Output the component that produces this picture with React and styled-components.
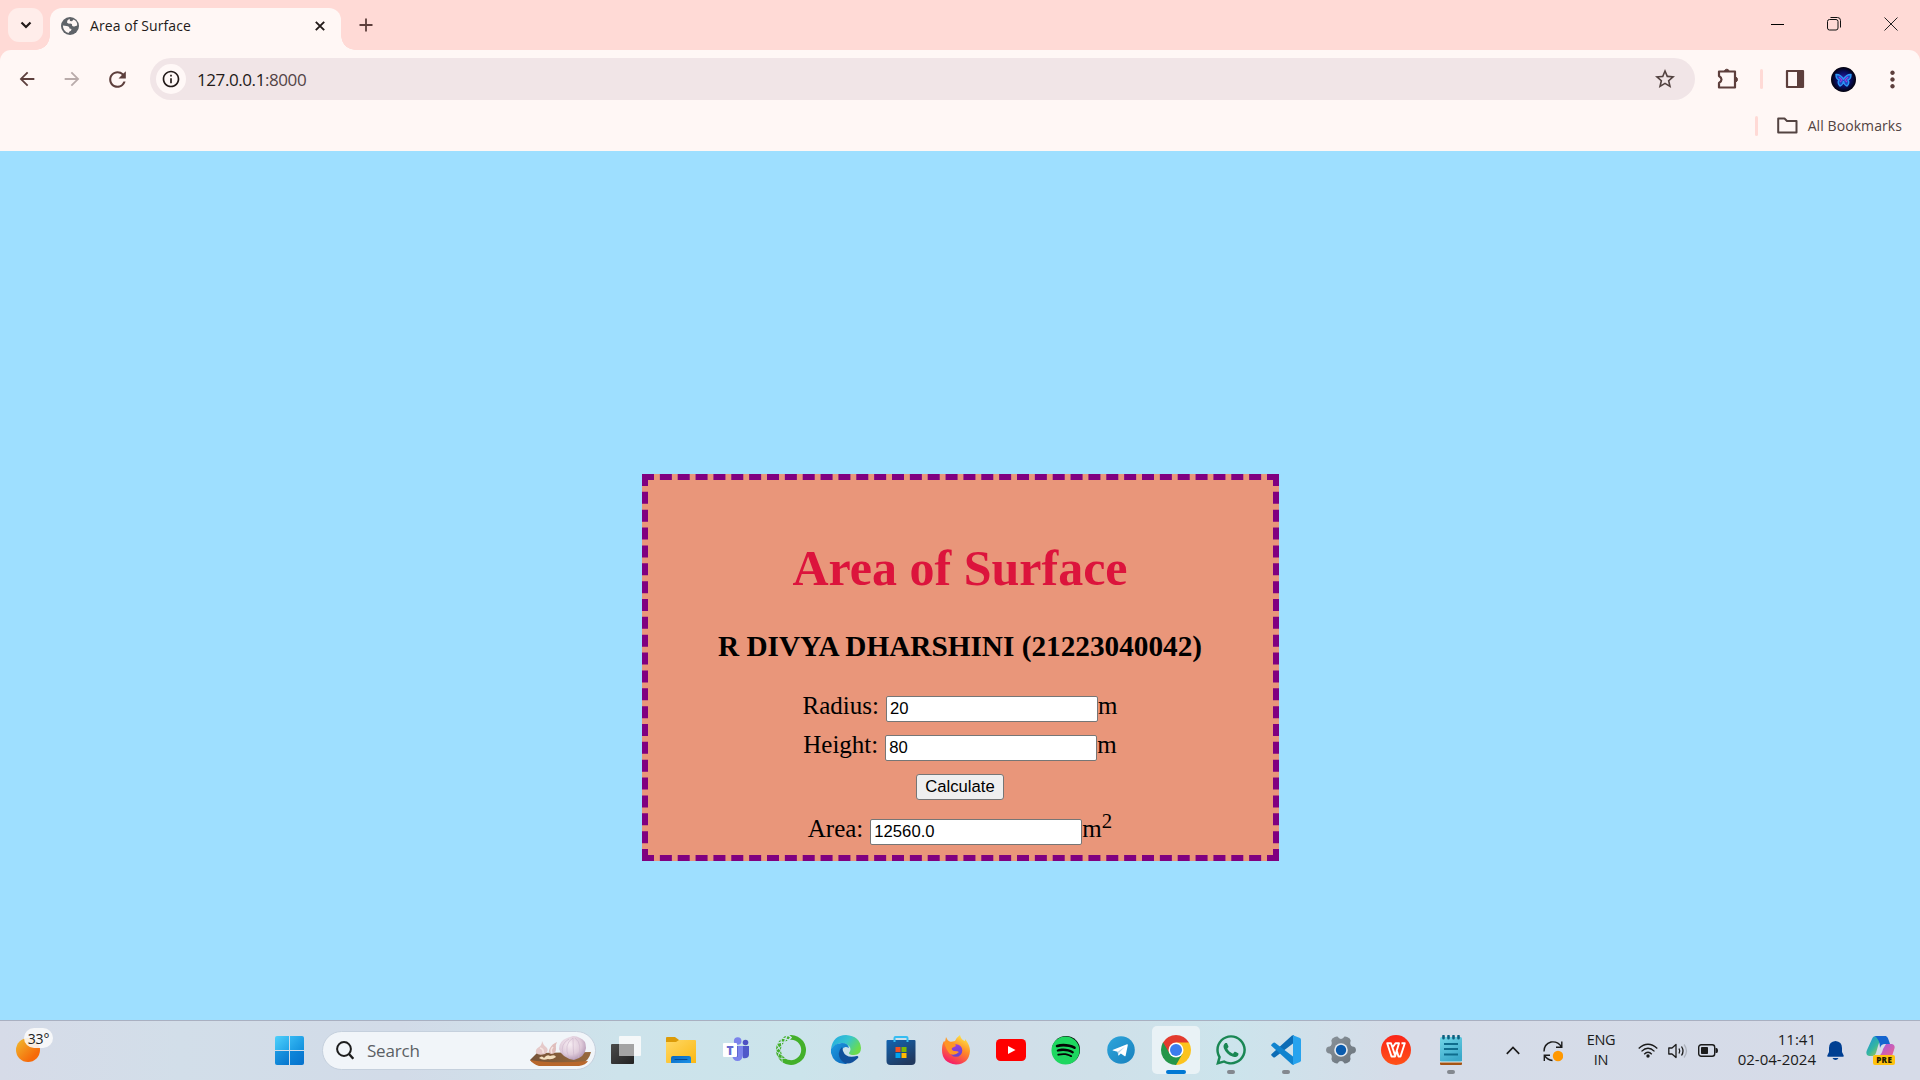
import React from "react";
import styled, { createGlobalStyle } from "styled-components";
import {
  MdArrowBack,
  MdArrowForward,
  MdRefresh,
  MdInfoOutline,
  MdStarBorder,
  MdMoreVert,
} from "react-icons/md";
import { FaWhatsapp, FaSpotify } from "react-icons/fa";
import { SiAnaconda } from "react-icons/si";

const GlobalStyle = createGlobalStyle`
  * { box-sizing: border-box; }
  html, body { margin: 0; padding: 0; }
  body { overflow: hidden; }
  svg { display: block; flex: none; }
`;

const ui = `"Open Sans", "Noto Sans", sans-serif`;

const Screen = styled.div`
  width: 1920px;
  height: 1080px;
  display: flex;
  flex-direction: column;
  background: #ffdad6;
  font-family: ${ui};
`;

/* ---------- window frame ---------- */

const TabStrip = styled.header`
  height: 50px;
  display: flex;
  align-items: flex-start;
  padding: 8px 0 0 8px;
  flex: none;
`;

const TabSearch = styled.button`
  width: 35px;
  height: 34px;
  padding: 0;
  border: 0;
  border-radius: 11px;
  background: #ffedea;
  display: grid;
  place-items: center;
`;

const Tab = styled.div`
  position: relative;
  width: 291px;
  height: 42px;
  margin-left: 7px;
  padding: 0 16px 7px 11px;
  display: flex;
  align-items: center;
  border-radius: 12px 12px 0 0;
  background: #fff7f5;
  &::before,
  &::after {
    content: "";
    position: absolute;
    bottom: 0;
    width: 14px;
    height: 14px;
  }
  &::before {
    left: -14px;
    background: radial-gradient(circle at 0 0, transparent 13.5px, #fff7f5 14px);
  }
  &::after {
    right: -14px;
    background: radial-gradient(circle at 100% 0, transparent 13.5px, #fff7f5 14px);
  }
`;

const TabTitle = styled.span`
  flex: 1;
  margin-left: 11px;
  font-size: 14px;
  letter-spacing: 0.08px;
  color: #231a19;
  white-space: nowrap;
`;

const NewTab = styled.div`
  margin: 10px 0 0 18px;
`;

const WindowButtons = styled.div`
  margin: 9px 22px 0 auto;
  display: flex;
  gap: 43px;
`;

const Toolbar = styled.div`
  height: 58px;
  flex: none;
  padding: 8px 10px 0 16px;
  display: flex;
  align-items: flex-start;
  background: #fff7f5;
  border-radius: 11px 11px 0 0;
  color: #534341;
`;

const NavButtons = styled.div`
  width: 134px;
  height: 42px;
  flex: none;
  display: flex;
  align-items: center;
`;

const NavIcon = styled.span`
  display: flex;
  margin-right: ${(p) => p.$gap}px;
  color: ${(p) => (p.$off ? "#b9abaa" : "#5d3f3c")};
`;

const Omnibox = styled.div`
  width: 1545px;
  height: 42px;
  flex: none;
  border-radius: 21px;
  background: #f1e5e7;
  display: flex;
  align-items: center;
  padding: 0 18px 0 6px;
`;

const SiteInfo = styled.span`
  width: 30px;
  height: 30px;
  border-radius: 50%;
  background: #fff8f7;
  color: #231a19;
  display: grid;
  place-items: center;
`;

const Address = styled.span`
  flex: 1;
  margin-left: 11px;
  font-size: 17px;
  letter-spacing: -0.42px;
  color: #231a19;
  span {
    color: #534346;
  }
`;

const ToolIcons = styled.div`
  height: 42px;
  flex: 1;
  display: flex;
  align-items: center;
  margin-left: 22px;
`;

const Divider = styled.span`
  width: 3px;
  height: 20px;
  flex: none;
  border-radius: 2px;
  background: #ffdad6;
  margin: ${(p) => p.$margin};
`;

const AvatarSlot = styled.span`
  margin: 0 23px 0 26px;
`;

const Bookmarks = styled.div`
  height: 43px;
  flex: none;
  padding: 0 18px 8px 0;
  display: flex;
  align-items: center;
  justify-content: flex-end;
  background: #fff7f5;
  color: #534341;
  font-size: 14px;
  letter-spacing: 0.08px;
  span:last-child {
    margin-left: 10px;
  }
`;

/* ---------- web page ---------- */

const Page = styled.main`
  height: 869px;
  flex: none;
  padding-top: 323px;
  display: flex;
  justify-content: center;
  align-items: flex-start;
  background: #9edfff;
  font-family: "Liberation Serif", "Times New Roman", serif;
`;

const Card = styled.section`
  width: 637px;
  height: 387px;
  padding-top: 60px;
  border: 6px dashed #800080;
  background: #e9967a;
  color: #000;
  display: flex;
  flex-direction: column;
  align-items: center;
`;

const Title = styled.h1`
  margin: 0;
  font-size: 50px;
  line-height: 57px;
  color: #dc143c;
  white-space: nowrap;
`;

const Author = styled.h3`
  margin: 33px 0 0;
  font-size: 29.25px;
  line-height: 33px;
  white-space: nowrap;
`;

const Field = styled.div`
  height: 28px;
  margin-top: ${(p) => p.$top}px;
  display: flex;
  align-items: baseline;
  font-size: 25px;
  line-height: 28px;
  white-space: nowrap;
`;

const Value = styled.input`
  width: 212px;
  height: 26px;
  margin-left: 7px;
  padding: 1px 3px;
  border: 1px solid #767676;
  border-radius: 2px;
  background: #fff;
  color: #000;
  font: 16.667px "Liberation Sans", Arial, sans-serif;
`;

const Power = styled.sup`
  font-size: 20.8px;
  line-height: 0;
  vertical-align: baseline;
  position: relative;
  top: -9px;
`;

const Calculate = styled.button`
  width: 88px;
  height: 26px;
  margin-top: 15px;
  padding: 0;
  flex: none;
  border: 1px solid #767676;
  border-radius: 3px;
  background: #efefef;
  color: #000;
  font: 16.667px "Liberation Sans", Arial, sans-serif;
`;

/* ---------- taskbar ---------- */

const Taskbar = styled.footer`
  height: 60px;
  flex: none;
  display: flex;
  align-items: center;
  border-top: 1px solid #a9b0c1;
  background: linear-gradient(
    90deg,
    #d6dbe8 0,
    #d2dee9 180px,
    #d2dbe8 400px,
    #cde3eb 620px,
    #cbe4eb 800px,
    #d1dee9 950px,
    #cfe0e9 1100px,
    #cce4ec 1230px,
    #d5dce8 1400px,
    #d6dbe8 1920px
  );
`;

const Weather = styled.div`
  position: relative;
  width: 24px;
  height: 24px;
  margin: 0 0 1px 16px;
  border-radius: 50%;
  background: linear-gradient(135deg, #f0be30, #f66a0a 75%);
`;

const Degrees = styled.span`
  position: absolute;
  left: 8px;
  top: -10px;
  width: 29px;
  height: 20px;
  border-radius: 10px;
  background: rgba(251, 250, 250, 0.88);
  color: #222;
  font-size: 14px;
  letter-spacing: -0.2px;
  line-height: 21px;
  text-align: center;
`;

const Start = styled.div`
  margin-left: 235px;
  display: grid;
  grid-template-columns: 14px 14px;
  grid-auto-rows: 14px;
  gap: 1px;
  border-radius: 2px;
  overflow: hidden;
`;

const Pane = styled.i`
  background: linear-gradient(135deg, ${(p) => p.$from}, ${(p) => p.$to});
`;

const SearchBox = styled.div`
  width: 274px;
  height: 39px;
  flex: none;
  margin-left: 18px;
  padding: 0 4px 0 13px;
  border: 1px solid #c5d0dd;
  border-radius: 20px;
  background: #f1f5f9;
  display: flex;
  align-items: center;
  color: #5b5f64;
  font-size: 17px;
  letter-spacing: -0.2px;
  span {
    flex: 1;
    margin-left: 13px;
  }
`;

const Apps = styled.div`
  display: flex;
  margin-left: 2px;
`;

const AppSlot = styled.div`
  width: 55px;
  height: 59px;
  padding-bottom: 1px;
  display: flex;
  align-items: center;
  justify-content: center;
`;

const Tile = styled.div`
  width: 48px;
  height: 48px;
  padding-top: 9px;
  border-radius: 5px;
  background: ${(p) => (p.$active ? "#e9f2f6" : "transparent")};
  display: flex;
  flex-direction: column;
  align-items: center;
  justify-content: space-between;
`;

const IconBox = styled.span`
  width: 30px;
  height: 30px;
  display: flex;
  align-items: center;
  justify-content: center;
`;

const Running = styled.i`
  width: ${(p) => (p.$active ? 20 : 8)}px;
  height: ${(p) => (p.$shown ? 4 : 0)}px;
  border-radius: 2px;
  background: ${(p) => (p.$active ? "#0078d4" : "#83888f")};
`;

const Round = styled.span`
  width: ${(p) => p.$size}px;
  height: ${(p) => p.$size}px;
  border-radius: 50%;
  background: ${(p) => p.$bg};
  display: flex;
  align-items: center;
  justify-content: center;
`;

const Tray = styled.div`
  flex: 1;
  display: flex;
  align-items: center;
  color: #1b1b1b;
`;

const TrayText = styled.div`
  width: ${(p) => p.$width}px;
  margin-left: ${(p) => p.$left}px;
  padding-bottom: ${(p) => p.$lift}px;
  text-align: ${(p) => p.$align};
  font-size: ${(p) => p.$size}px;
  line-height: 20px;
  letter-spacing: ${(p) => p.$track}px;
  white-space: nowrap;
`;

const TrayIcon = styled.span`
  margin-left: ${(p) => p.$left}px;
`;

/* ---------- drawings ---------- */

const Globe = () => (
  <svg width="18" height="18" viewBox="0 0 18 18">
    <circle cx="9" cy="9" r="9" fill="#5f6368" />
    <path d="M8.500 1.800Q5.500 3.500 6 5.500 7 7 9 6.500 11.500 6.500 11 8.500 12 10 14 9.300L16.200 8.500Q16.500 4 12.500 2.500L11 4.200 9 4Z" fill="#fff7f5" />
    <path d="M1.900 8.500L5.500 9Q8.500 9 8.500 11.500L10.500 12Q10.500 14 8.500 14.500L7.500 16Q2 14.500 1.900 8.500Z" fill="#fff7f5" />
  </svg>
);

const Garlic = () => (
  <svg width="62" height="30" viewBox="0 0 62 30">
    <defs>
      <radialGradient id="bulb" cx=".4" cy=".35" r=".7">
        <stop offset="0" stopColor="#f6ecf2" />
        <stop offset=".6" stopColor="#dfcbda" />
        <stop offset="1" stopColor="#ae92b0" />
      </radialGradient>
      <linearGradient id="board" x2="1">
        <stop offset="0" stopColor="#755338" />
        <stop offset="1" stopColor="#98693b" />
      </linearGradient>
    </defs>
    <path d="M1 24L8 17 62 16Q60 24 54 27L10 28Q4 27 1 24Z" fill="url(#board)" />
    <path d="M1 24Q25 28 59 25Q57 29 50 30H10Q4 28 1 24Z" fill="#b8672c" />
    <path d="M13 5Q14 9 18 12 20 15 16 18 10 20 7 17 6 13 10 11 13 9 13 5Z" fill="#e5c9c9" />
    <path d="M28 6Q23 8 21 12 18 17 22 18 27 18 27 13Q26 9 28 6Z" fill="#dfbebc" />
    <path d="M11 12Q15 13 14 17M24 11Q21 14 23 17" stroke="#f5e4e0" strokeWidth="1.600" fill="none" />
    <path d="M44 0Q48 0 51 2 57 4 57 12 56 21 45 24 33 22 30 13 30 5 38 2Z" fill="url(#bulb)" />
    <path d="M44 2Q34 8 40 22M46 2Q54 8 49 22M44 2Q44 12 45 23M40 3Q31 8 34 18" stroke="#cdb5cb" fill="none" strokeWidth=".6" />
    <path d="M10 22q3-3 5 0 3-4 6-2 5-2 6 1-4 3-8 2-5 2-9-1Z" fill="#f3dfbf" />
  </svg>
);

const TaskView = () => (
  <svg width="30" height="30" viewBox="0 0 30 30">
    <defs>
      <linearGradient id="tv" y2="1">
        <stop offset="0" stopColor="#4b4b4b" />
        <stop offset="1" stopColor="#222" />
      </linearGradient>
    </defs>
    <rect x="0" y="9" width="23" height="20" rx="1" fill="url(#tv)" />
    <rect x="8" y="1" width="22" height="20" rx="1" fill="#fafafa" opacity=".88" />
    <path d="M8 9H23V21H8Z" fill="#999" opacity=".85" />
  </svg>
);

const Explorer = () => (
  <svg width="30" height="30" viewBox="0 0 30 30">
    <defs>
      <linearGradient id="fold" x2="1" y2="1">
        <stop offset="0" stopColor="#ffd865" />
        <stop offset="1" stopColor="#fbb813" />
      </linearGradient>
      <linearGradient id="foldblue" y2="1">
        <stop offset="0" stopColor="#0b67be" />
        <stop offset="1" stopColor="#1a91e8" />
      </linearGradient>
    </defs>
    <path d="M0 3Q0 2 1 2H9L13 5V8H0Z" fill="#dc9b08" />
    <path d="M0 7H10L13 5H29Q30 5 30 6V28H1Q0 28 0 27Z" fill="url(#fold)" />
    <path d="M5 28V23Q5 21 7 21H23Q25 21 25 23V28Z" fill="url(#foldblue)" />
    <path d="M9 24.5H21" stroke="#074a93" strokeLinecap="round" />
  </svg>
);

const Teams = () => (
  <svg width="28" height="26" viewBox="0 0 28 26">
    <circle cx="23.5" cy="5.5" r="2.8" fill="#4f52c4" />
    <circle cx="15.7" cy="4" r="3.8" fill="#7b83eb" />
    <path d="M19 9H27V18Q26 22 21 21Z" fill="#5059c9" />
    <path d="M10 9H21V18Q20 24 15.5 24 11 24 10 18Z" fill="#7b83eb" />
    <path d="M12 9H16V20H10Z" fill="#4b53bc" opacity=".6" />
    <rect x="1" y="6" width="14" height="14" rx="1" fill="#fff" />
    <text x="8" y="17.6" textAnchor="middle" fontFamily="Open Sans, sans-serif" fontSize="12" fontWeight="800" fill="#6468cf">
      T
    </text>
  </svg>
);

const Edge = () => (
  <svg width="30" height="30" viewBox="0 0 30 30">
    <defs>
      <linearGradient id="ed1" x2="1" y2=".5">
        <stop offset="0" stopColor="#22a7e4" />
        <stop offset=".55" stopColor="#36c5cf" />
        <stop offset="1" stopColor="#6bdc4c" />
      </linearGradient>
      <linearGradient id="ed2" y2="1">
        <stop offset="0" stopColor="#1d9ce2" />
        <stop offset="1" stopColor="#0b63b8" />
      </linearGradient>
    </defs>
    <path d="M0 14Q2 0 15 0 29 1 30 13 30 20 23 20 18 20 18 18 21 14 18 11 10 4 0 14Z" fill="url(#ed1)" />
    <path d="M0 14Q4 8 11 8 17 8 18 13 13 10 11 15 10 22 16 29 3 30 0 18Z" fill="url(#ed2)" />
    <path d="M11 12Q5 18 10 25 17 33 27 23 28 21 26 21 15 24 12 16Z" fill="#11509b" />
  </svg>
);

const Store = () => (
  <svg width="30" height="30" viewBox="0 0 30 30">
    <defs>
      <linearGradient id="st" x2=".6" y2="1">
        <stop offset="0" stopColor="#1264b1" />
        <stop offset="1" stopColor="#21395f" />
      </linearGradient>
    </defs>
    <path d="M.5 6Q.5 5 1.5 5H28.500Q29.500 5 29.500 6V26Q29.500 30 25.500 30H4.500Q.5 30 .5 26Z" fill="url(#st)" />
    <path d="M8.500 7V3Q8.500 2 9.500 2H20.500Q21.500 2 21.500 3V7" fill="none" stroke="#35bdf2" strokeWidth="2" />
    <path d="M9.500 12H14.500V17H9.500Z" fill="#f25022" />
    <path d="M15.500 12H20.500V17H15.500Z" fill="#7fba00" />
    <path d="M9.500 18H14.500V23H9.500Z" fill="#00a4ef" />
    <path d="M15.500 18H20.500V23H15.500Z" fill="#ffb900" />
  </svg>
);

const Firefox = () => (
  <svg width="30" height="30" viewBox="0 0 30 30">
    <defs>
      <linearGradient id="ff" x1=".8" x2=".3" y2="1">
        <stop offset="0" stopColor="#fff04a" />
        <stop offset=".45" stopColor="#ff8a27" />
        <stop offset="1" stopColor="#f5156c" />
      </linearGradient>
      <linearGradient id="ffp" x2=".3" y2="1">
        <stop offset="0" stopColor="#a53be4" />
        <stop offset="1" stopColor="#6745cf" />
      </linearGradient>
    </defs>
    <path d="M5 2Q6 5 9 7L14 6Q16 2 19 0 20 5 24 6V4Q29 10 29 16 28 29 15 29.500 1 28 1 15 1 9 3 6L4 7Z" fill="url(#ff)" />
    <circle cx="15" cy="15.500" r="6.300" fill="url(#ffp)" />
    <path d="M3 7Q9 5 14 9L15 11 11 13Q10 15 13 16 17 16 18 17 14 21 9 19 5 15 3 7Z" fill="#ff9526" />
  </svg>
);

const YouTube = () => (
  <svg width="30" height="30" viewBox="0 0 30 30">
    <rect y="4" width="30" height="22" rx="4.500" fill="#f00" />
    <path d="M12 11L19.500 15 12 19Z" fill="#fff" />
  </svg>
);

const Telegram = () => (
  <svg width="28" height="30" viewBox="0 0 28 30">
    <defs>
      <linearGradient id="tg" y2="1">
        <stop offset="0" stopColor="#2ea6dc" />
        <stop offset="1" stopColor="#1880bd" />
      </linearGradient>
    </defs>
    <circle cx="14" cy="15" r="13.800" fill="url(#tg)" />
    <path d="M5.500 15L20 9.300Q21 9 20.800 10.200L18.600 20.700Q18.300 21.700 17.400 21.100L13.800 18.500 12 20.300Q11.300 20.900 11.200 19.900L10.600 16.800 5.800 15.500Z" fill="#fff" />
    <path d="M10.600 16.800L18 11.700 12.300 17.500 11.600 20Z" fill="#b8d5e8" />
  </svg>
);

const Chrome = () => (
  <svg width="30" height="30" viewBox="0 0 30 30">
    <path d="M15 15L2.010 7.500A15 15 0 0 1 27.990 7.500Z" fill="#e33b2e" />
    <path d="M15 15L27.990 7.500A15 15 0 0 1 15 30Z" fill="#fcc31e" />
    <path d="M15 15V30A15 15 0 0 1 2.010 7.500Z" fill="#24964a" />
    <path d="M15 7.500H27.990L21.500 18.750Z" fill="#fcc31e" />
    <path d="M21.500 18.750L15 30 8.500 18.750Z" fill="#24964a" />
    <path d="M8.500 18.750L2.010 7.500 15 7.500Z" fill="#e33b2e" />
    <path d="M8.500 18.750L2.010 7.500 1 12 6 22Z" fill="#24964a" />
    <circle cx="15" cy="15" r="7.500" fill="#fff" />
    <circle cx="15" cy="15" r="6" fill="#3b7ded" />
  </svg>
);

const VsCode = () => (
  <svg width="30" height="30" viewBox="0 0 30 30">
    <path d="M22 8.500L4 22.300Q3 23 2 22L.5 20.600Q-.3 19.700 .6 18.900L21 .6Q22 0 23 .3Z" fill="#0c6cb5" />
    <path d="M22 21.500L4 7.700Q3 7 2 8L.5 9.400Q-.3 10.300 .6 11.100L21 29.400Q22 30 23 29.700Z" fill="#1084cf" />
    <path d="M22 .2L29 3Q30 3.600 30 4.800V25.200Q30 26.400 29 27L22 29.800Z" fill="#27a3ee" />
  </svg>
);

const Gear = () => (
  <svg width="30" height="30" viewBox="0 0 30 30">
    <defs>
      <linearGradient id="gear" y2="1">
        <stop offset="0" stopColor="#8b949b" />
        <stop offset="1" stopColor="#6a737b" />
      </linearGradient>
    </defs>
    <path
      d="M11.500 1.600Q9.800 1 6.300 3.600 4.600 5.200 5.800 8 5.700 11.600 2 11.700 .2 12 0 15 .2 18 2 18.300 5.700 18.400 5.800 22 4.600 24.800 6.300 26.400 9.800 29 11.500 28.400 13 26 15 26 17 26 18.500 28.400 20.200 29 23.700 26.400 25.400 24.800 24.200 22 24.300 18.400 28 18.300 29.800 18 30 15 29.800 12 28 11.700 24.300 11.600 24.200 8 25.400 5.200 23.700 3.600 20.200 1 18.500 1.600 17 4 15 4 13 4 11.500 1.600Z"
      fill="url(#gear)"
    />
    <circle cx="15" cy="15" r="6.800" fill="#e4eaf0" />
    <circle cx="15" cy="15" r="5.200" fill="#0b5cad" />
  </svg>
);

const Notepad = () => (
  <svg width="22" height="30" viewBox="0 0 22 30">
    <defs>
      <linearGradient id="np" x2=".5" y2="1">
        <stop offset="0" stopColor="#72d7e8" />
        <stop offset="1" stopColor="#3ba9ca" />
      </linearGradient>
    </defs>
    <rect y="2" width="22" height="25" rx="1.500" fill="url(#np)" />
    <path d="M0 27H22V29Q22 30 21 30H1Q0 30 0 29Z" fill="#a55414" />
    <path d="M0 26.500H22V27.500H0Z" fill="#e9f3f5" />
    <path d="M3.500 1V3.200M8.500 1V3.200M13.500 1V3.200M18.500 1V3.200" stroke="#0c607f" strokeWidth="2.600" strokeLinecap="round" />
    <path d="M4 9H18M4 14H18M4 19.500H18" stroke="#0e6d8d" strokeWidth="1.800" />
  </svg>
);

const Wps = () => (
  <svg width="20" height="16" viewBox="0 0 20 16" fill="none" stroke="#fff" strokeWidth="1.900" strokeLinejoin="round">
    <path d="M6.500 5.500L9.500 1.200H13L9 14.500H5.500L1.200 1.200H5L9 13M10.500 8L12.500 14.500H14.500L18.800 1.200H15.500" />
  </svg>
);

const Copilot = () => (
  <svg width="32" height="30" viewBox="0 0 32 30">
    <defs>
      <linearGradient id="cp1" y2="1">
        <stop offset="0" stopColor="#168de6" />
        <stop offset=".5" stopColor="#35b6a0" />
        <stop offset="1" stopColor="#e8cf21" />
      </linearGradient>
      <linearGradient id="cp2" y2="1">
        <stop offset="0" stopColor="#a057e5" />
        <stop offset="1" stopColor="#f0648d" />
      </linearGradient>
    </defs>
    <path d="M6 3Q7 0 10 0H18Q14 3 12 10L10 17Q9 20 7 20H3Q-1 19 1 14Z" fill="url(#cp1)" />
    <path d="M13 0H20Q22 1 23 5L24 8H19Q15 8 14 12 14 4 9 0Z" fill="#1464cf" />
    <path d="M20 8H26Q30 9 28 14L26 20H13Q16 18 17 13Z" fill="url(#cp2)" />
    <rect x="7" y="19" width="22" height="10" rx="2" fill="#ffc20e" />
    <text x="18.200" y="26.900" textAnchor="middle" fontFamily="Open Sans, sans-serif" fontSize="8" fontWeight="800" letterSpacing=".4" fill="#221a00">
      PRE
    </text>
  </svg>
);

const Avatar = () => (
  <svg width="25" height="25" viewBox="0 0 25 25">
    <defs>
      <radialGradient id="av">
        <stop offset="0" stopColor="#3a1fb0" />
        <stop offset=".55" stopColor="#0a0f66" />
        <stop offset="1" stopColor="#02010c" />
      </radialGradient>
    </defs>
    <circle cx="12.500" cy="12.500" r="12.500" fill="url(#av)" />
    <path d="M12.500 12Q9 7 5 7.500 5 12 8 13 6 16 9 19 12 18 12.500 14 13 18 16 19 19 16 17 13 20 12 20 7.500 16 7 12.500 12Z" fill="#1d49c4" stroke="#2c96f5" strokeWidth="1.400" />
    <path d="M8 10L11 13 9 15M17 10L14 13 16 15" stroke="#9a3fdd" strokeWidth="1.200" fill="none" />
  </svg>
);

const apps = [
  { name: "taskview", icon: <TaskView /> },
  { name: "explorer", icon: <Explorer /> },
  { name: "teams", icon: <Teams /> },
  { name: "anaconda", icon: <SiAnaconda size={30} color="#43b02a" /> },
  { name: "edge", icon: <Edge /> },
  { name: "store", icon: <Store /> },
  { name: "firefox", icon: <Firefox /> },
  { name: "youtube", icon: <YouTube /> },
  {
    name: "spotify",
    icon: (
      <Round $size={28} $bg="#050505">
        <FaSpotify size={29} color="#1ed760" />
      </Round>
    ),
  },
  { name: "telegram", icon: <Telegram /> },
  { name: "chrome", icon: <Chrome />, running: true, active: true },
  { name: "whatsapp", icon: <FaWhatsapp size={34} color="#1a8754" />, running: true },
  { name: "vscode", icon: <VsCode />, running: true },
  { name: "settings", icon: <Gear /> },
  {
    name: "wps",
    icon: (
      <Round $size={30} $bg="linear-gradient(#fb2418, #ff5218)">
        <Wps />
      </Round>
    ),
  },
  { name: "notepad", icon: <Notepad />, running: true },
];

export default function App() {
  return (
    <Screen>
      <GlobalStyle />
      <TabStrip>
        <TabSearch>
          <svg width="12" height="8" viewBox="0 0 12 8" fill="none" stroke="#231a19" strokeWidth="2.200">
            <path d="M1.500 1.500L6 6 10.500 1.500" />
          </svg>
        </TabSearch>
        <Tab>
          <Globe />
          <TabTitle>Area of Surface</TabTitle>
          <svg width="10" height="10" viewBox="0 0 10 10" stroke="#231a19" strokeWidth="1.900">
            <path d="M.8 .8L9.200 9.200M9.200 .8L.8 9.200" />
          </svg>
        </Tab>
        <NewTab>
          <svg width="14" height="14" viewBox="0 0 14 14" stroke="#5d3f3c" strokeWidth="1.800">
            <path d="M7 .5V13.500M.5 7H13.500" />
          </svg>
        </NewTab>
        <WindowButtons>
          <svg width="13" height="14" viewBox="0 0 13 14" stroke="#000">
            <path d="M0 7.500H13" />
          </svg>
          <svg width="14" height="14" viewBox="0 0 14 14" stroke="#111" fill="none">
            <rect x=".5" y="2.500" width="10.500" height="10.500" rx="2" />
            <path d="M3.500 .5H10.500Q13.500 .5 13.500 3.500V10.500" />
          </svg>
          <svg width="14" height="14" viewBox="0 0 14 14" stroke="#222">
            <path d="M.5 .5L13.500 13.500M13.500 .5L.5 13.500" />
          </svg>
        </WindowButtons>
      </TabStrip>
      <Toolbar>
        <NavButtons>
          <NavIcon $gap={23}>
            <MdArrowBack size={22} />
          </NavIcon>
          <NavIcon $gap={22} $off>
            <MdArrowForward size={22} />
          </NavIcon>
          <NavIcon $gap={0}>
            <MdRefresh size={25} />
          </NavIcon>
        </NavButtons>
        <Omnibox>
          <SiteInfo>
            <MdInfoOutline size={20} />
          </SiteInfo>
          <Address>
            127.0.0.1<span>:8000</span>
          </Address>
          <MdStarBorder size={24} />
        </Omnibox>
        <ToolIcons>
          <svg width="22" height="22" viewBox="0 0 22 22" fill="none" stroke="#5d3f3c" strokeWidth="2.200" strokeLinejoin="round">
            <path d="M2 3.500H18V19.500H2V15Q4.500 13.500 4.500 11.500T2 8Z" />
            <path d="M7.500 3Q8 1.200 9.800 1.200T12 3ZM18.500 9Q20.500 9.500 20.500 11.500T18.500 14Z" fill="#5d3f3c" strokeWidth="1" />
          </svg>
          <Divider $margin="0 22px 0 21px" />
          <svg width="20" height="20" viewBox="0 0 20 20">
            <path d="M2 2H18V18H2Z" fill="none" stroke="#5d3f3c" strokeWidth="2.200" strokeLinejoin="round" />
            <path d="M12 2H18V18H12Z" fill="#5d3f3c" />
          </svg>
          <AvatarSlot>
            <Avatar />
          </AvatarSlot>
          <MdMoreVert size={27} color="#5d3f3c" />
        </ToolIcons>
      </Toolbar>
      <Bookmarks>
        <Divider $margin="0 19px 0 0" />
        <svg width="21" height="17" viewBox="0 0 21 17" fill="none" stroke="#534341" strokeWidth="2" strokeLinejoin="round">
          <path d="M1.200 1.500H7.500L10 4H19.500V15.500H1.200Z" />
        </svg>
        <span>All Bookmarks</span>
      </Bookmarks>

      <Page>
        <Card>
          <Title>Area of Surface</Title>
          <Author>R DIVYA DHARSHINI (21223040042)</Author>
          <Field $top={29}>
            Radius:
            <Value defaultValue="20" />m
          </Field>
          <Field $top={11}>
            Height:
            <Value defaultValue="80" />m
          </Field>
          <Calculate>Calculate</Calculate>
          <Field $top={15}>
            Area:
            <Value readOnly value="12560.0" />m<Power>2</Power>
          </Field>
        </Card>
      </Page>

      <Taskbar>
        <Weather>
          <Degrees>33°</Degrees>
        </Weather>
        <Start>
          <Pane $from="#4fd0fb" $to="#22a4e8" />
          <Pane $from="#35b8f3" $to="#1290dd" />
          <Pane $from="#1c9ae3" $to="#0675cd" />
          <Pane $from="#0f88da" $to="#0671cc" />
        </Start>
        <SearchBox>
          <svg width="18" height="19" viewBox="0 0 18 19" fill="none" stroke="#1d1d1d" strokeWidth="2">
            <circle cx="8" cy="8" r="6.900" />
            <path d="M13 13L17.300 17.800" strokeWidth="2.400" />
          </svg>
          <span>Search</span>
          <Garlic />
        </SearchBox>
        <Apps>
          {apps.map((a) => (
            <AppSlot key={a.name}>
              <Tile $active={a.active}>
                <IconBox>{a.icon}</IconBox>
                <Running $shown={a.running} $active={a.active} />
              </Tile>
            </AppSlot>
          ))}
        </Apps>
        <Tray>
          <TrayIcon $left={28}>
            <svg width="14" height="9" viewBox="0 0 14 9" fill="none" stroke="#1b1b1b" strokeWidth="1.700">
              <path d="M.8 7.800L7 1.500 13.200 7.800" />
            </svg>
          </TrayIcon>
          <TrayIcon $left={23}>
            <svg width="20" height="22" viewBox="0 0 20 22" fill="none" stroke="#1b1b1b" strokeWidth="1.400">
              <path d="M1 11.500Q1 4 8 2 15 1 18.500 7M18.800 1.500V7.300H13M9.500 20.500Q4.500 20 1.500 15.500M1.300 21V15.200H7" />
              <circle cx="15" cy="16" r="5.200" fill="#ff9800" stroke="none" />
            </svg>
          </TrayIcon>
          <TrayText $width={32} $left={22} $align="center" $size={14.5} $track={-0.3} $lift={1}>
            ENG
            <br />
            IN
          </TrayText>
          <TrayIcon $left={21}>
            <svg width="20" height="15" viewBox="0 0 20 15" fill="none" stroke="#1b1b1b" strokeWidth="1.300">
              <path d="M.7 5.500Q10-3 19.300 5.500M3.500 8.400Q10 2 16.500 8.400M6.200 11.200Q10 7.300 13.800 11.200" />
              <circle cx="10" cy="13" r="1.700" fill="#1b1b1b" stroke="none" />
            </svg>
          </TrayIcon>
          <TrayIcon $left={10}>
            <svg width="20" height="16" viewBox="0 0 20 16" fill="none" stroke="#1b1b1b" strokeWidth="1.300">
              <path d="M.8 5H4L8 1.500V14.500L4 11H.8Z" strokeLinejoin="round" />
              <path d="M11 5.500Q12.500 8 11 10.500M13.500 3.500Q16.500 8 13.500 12.500" />
              <path d="M16 1.500Q21 8 16 14.500" stroke="#aeb3bd" />
            </svg>
          </TrayIcon>
          <TrayIcon $left={10}>
            <svg width="20" height="13" viewBox="0 0 20 13">
              <rect x=".7" y=".7" width="16" height="11.600" rx="2.500" fill="none" stroke="#1b1b1b" strokeWidth="1.400" />
              <rect x="3" y="3" width="7" height="7" rx=".8" fill="#1b1b1b" />
              <path d="M17.500 4H18.500Q20 4 20 6.500T18.500 9H17.500Z" fill="#1b1b1b" />
            </svg>
          </TrayIcon>
          <TrayText $width={90} $left={8} $align="right" $size={15} $track={0} $lift={4}>
            11:41
            <br />
            02-04-2024
          </TrayText>
          <TrayIcon $left={11}>
            <svg width="17" height="19" viewBox="0 0 17 19" fill="#003f92">
              <path d="M8.500 0Q15 .5 15 7V11L16.700 14.500Q17 15.800 16 15.800H1Q0 15.800 .3 14.500L2 11V7Q2 .5 8.500 0ZM5.500 17H11.500Q10.500 19 8.500 19T5.500 17Z" />
            </svg>
          </TrayIcon>
          <TrayIcon $left={22}>
            <Copilot />
          </TrayIcon>
        </Tray>
      </Taskbar>
    </Screen>
  );
}
